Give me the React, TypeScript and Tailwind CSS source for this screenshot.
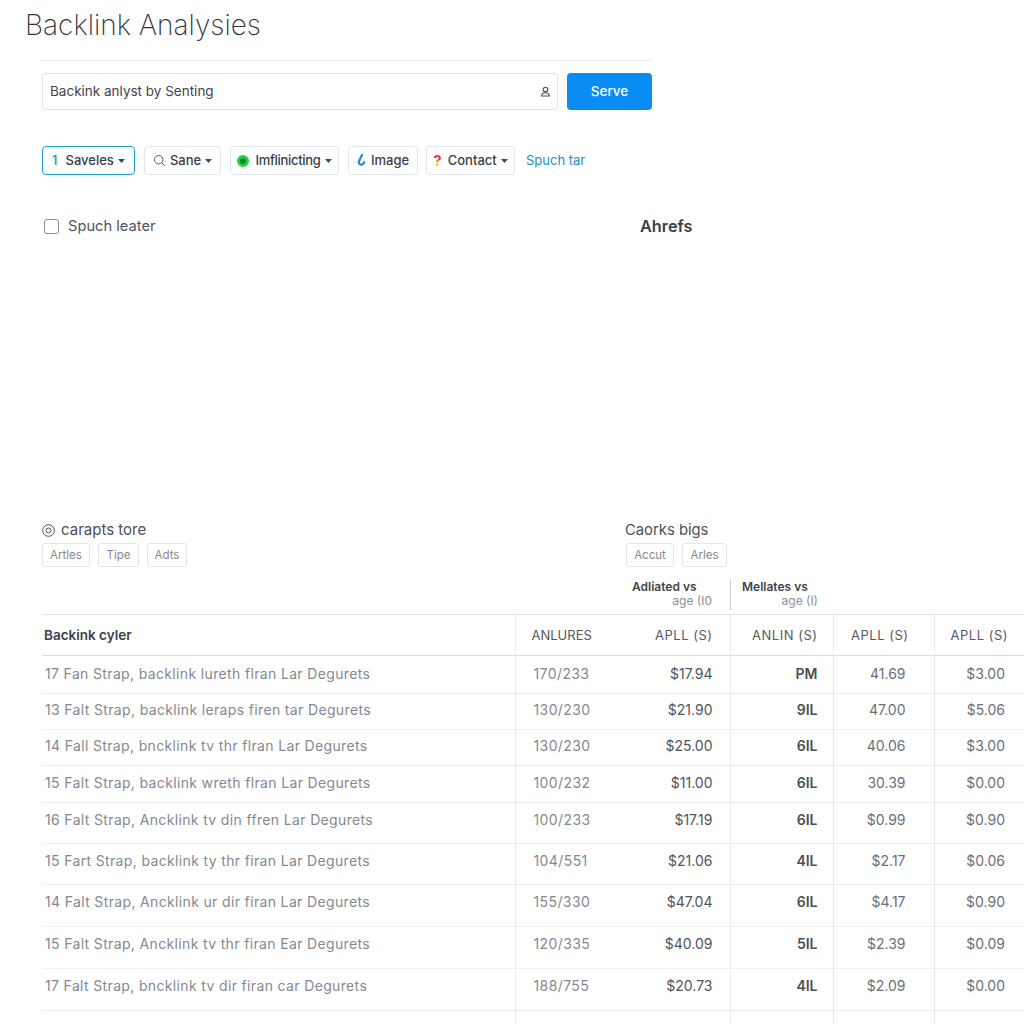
import type { ReactNode } from 'react';

interface RowData {
    name: string;
    ratio: string;
    price: string;
    code: string;
    apll: string;
    last: string;
    height: string;
}

const rows: RowData[] = [
    { name: '17 Fan Strap, backlink lureth flran Lar Degurets', ratio: '170/233', price: '$17.94', code: 'PM', apll: '41.69', last: '$3.00', height: 'h-[38px] [&>td]:pb-[2px]' },
    { name: '13 Falt Strap, backlink leraps firen tar Degurets', ratio: '130/230', price: '$21.90', code: '9IL', apll: '47.00', last: '$5.06', height: 'h-[36px] [&>td]:pb-[4px]' },
    { name: '14 Fall Strap, bncklink tv thr flran Lar Degurets', ratio: '130/230', price: '$25.00', code: '6IL', apll: '40.06', last: '$3.00', height: 'h-[36px] [&>td]:pb-[4px]' },
    { name: '15 Falt Strap, backlink wreth flran Lar Degurets', ratio: '100/232', price: '$11.00', code: '6IL', apll: '30.39', last: '$0.00', height: 'h-[37px] [&>td]:pb-[2px]' },
    { name: '16 Falt Strap, Ancklink tv din ffren Lar Degurets', ratio: '100/233', price: '$17.19', code: '6IL', apll: '$0.99', last: '$0.90', height: 'h-[41px] [&>td]:pb-[6px]' },
    { name: '15 Fart Strap, backlink ty thr firan Lar Degurets', ratio: '104/551', price: '$21.06', code: '4IL', apll: '$2.17', last: '$0.06', height: 'h-[41px] [&>td]:pb-[6px]' },
    { name: '14 Falt Strap, Ancklink ur dir firan Lar Degurets', ratio: '155/330', price: '$47.04', code: '6IL', apll: '$4.17', last: '$0.90', height: 'h-[42px] [&>td]:pb-[8px]' },
    { name: '15 Falt Strap, Ancklink tv thr firan Ear Degurets', ratio: '120/335', price: '$40.09', code: '5IL', apll: '$2.39', last: '$0.09', height: 'h-[42px] [&>td]:pb-[8px]' },
    { name: '17 Falt Strap, bncklink tv dir firan car Degurets', ratio: '188/755', price: '$20.73', code: '4IL', apll: '$2.09', last: '$0.00', height: 'h-[42px] [&>td]:pb-[8px]' },
];

function Caret() {
    return (
        <svg width="7" height="4" viewBox="0 0 7 4" className="ml-1" aria-hidden="true">
            <path d="M0 0h7L3.5 4z" fill="#444b55" />
        </svg>
    );
}

function Chip({ children, className }: { children: ReactNode; className: string }) {
    return (
        <div className={'flex h-[29px] items-center justify-center rounded-[4px] border text-[13px] font-medium text-[#3a4048] ' + className}>
            {children}
        </div>
    );
}

function Tag({ label, className }: { label: string; className: string }) {
    return (
        <div className={'flex h-6 items-center justify-center rounded-[3px] border border-[#e3e5e8] text-[11.5px] text-[#85898f] ' + className}>
            {label}
        </div>
    );
}

export default function App() {
    return (
        <div className="h-[1024px] w-[1024px] overflow-hidden bg-white font-[Inter,sans-serif]">
            <h1 className="pl-[25px] pt-[7px] text-[28px] font-extralight leading-9 text-[#33373d]">Backlink Analysies</h1>

            <div className="pl-[42px]">
                <div className="mt-[17px] w-[610px] border-t border-[#e8eaed]" />

                {/* Search */}
                <div className="mt-3 flex w-[610px] gap-[9px]">
                    <div className="flex h-[37px] flex-1 items-center justify-between rounded-[4px] border border-[#dfe2e6] pl-[7px] pr-1.5 text-[13.5px] text-[#3f444b]">
                        <span>Backink anlyst by Senting</span>
                        <svg width="11" height="11" viewBox="0 0 11 11" fill="none" stroke="#4a4f57" strokeWidth="1.1" aria-hidden="true">
                            <circle cx="5.5" cy="3.5" r="2.3" />
                            <path d="M1.5 10c.4-2.4 2-3.2 4-3.2s3.600.8 4 3.200z" />
                        </svg>
                    </div>
                    <button className="h-[37px] w-[85px] rounded-[4px] bg-[#0a8cf5] text-[13.5px] font-medium text-white">Serve</button>
                </div>

                {/* Filters */}
                <div className="mt-9 flex items-center gap-[9px]">
                    <Chip className="w-[93px] border-[#1d9fc7]">
                        <span className="mr-2 text-[#1d8fc7]">1</span>Saveles<Caret />
                    </Chip>
                    <Chip className="w-[77px] border-[#e2e5e9]">
                        <svg width="13" height="13" viewBox="0 0 13 13" fill="none" stroke="#555b63" strokeWidth="1" className="mr-1" aria-hidden="true">
                            <circle cx="5.700" cy="5.700" r="4.200" />
                            <path d="m8.800 8.800 3 3" />
                        </svg>
                        Sane<Caret />
                    </Chip>
                    <Chip className="w-[109px] border-[#e2e5e9] tracking-[-0.3px]">
                        <span className="mr-1.5 h-3 w-3 rounded-full border-[3px] border-[#1fd33f] bg-[#128a33]" />Imflinicting<Caret />
                    </Chip>
                    <Chip className="w-[70px] border-[#e2e5e9]">
                        <svg width="8" height="13" viewBox="0 0 8 13" className="mr-1.5" aria-hidden="true">
                            <path d="M5 1 2 7a2.600 2.600 0 1 0 5 1" fill="none" stroke="#1a8fd8" strokeWidth="2.200" strokeLinecap="round" />
                        </svg>
                        Image
                    </Chip>
                    <Chip className="-ml-px w-[89px] border-[#e2e5e9]">
                        <span className="mr-1.5 bg-gradient-to-b from-[#e02f2f] from-40% to-[#f5c518] to-70% bg-clip-text text-[15px] font-bold leading-none text-transparent">?</span>Contact<Caret />
                    </Chip>
                    <span className="ml-[2px] text-[13px] text-[#1d8fc7]">Spuch tar</span>
                </div>

                {/* Checkbox row */}
                <div className="mt-[39px] flex items-center">
                    <span className="ml-0.5 h-[15px] w-[15px] rounded-[3px] border border-[#8b9097]" />
                    <span className="ml-[9px] w-[572px] text-[14.7px] text-[#50555c]">Spuch leater</span>
                    <span className="text-[16.3px] font-semibold text-[#3c4047]">Ahrefs</span>
                </div>

                {/* Lower headers */}
                <div className="mt-[282px] flex">
                    <div className="w-[583px]">
                        <div className="flex items-center gap-1.5 text-[15px] leading-5 text-[#4b5057]">
                            <svg width="13" height="13" viewBox="0 0 13 13" fill="none" stroke="#4b5057" aria-hidden="true">
                                <circle cx="6.500" cy="6.500" r="5.800" />
                                <circle cx="6.500" cy="6.500" r="2.500" />
                            </svg>
                            carapts tore
                        </div>
                        <div className="mt-[3px] flex gap-2">
                            <Tag label="Artles" className="w-[48px]" />
                            <Tag label="Tipe" className="w-[41px]" />
                            <Tag label="Adts" className="w-[40px]" />
                        </div>
                    </div>
                    <div>
                        <div className="text-[14.8px] leading-5 text-[#4b5057]">Caorks bigs</div>
                        <div className="mt-[3px] flex gap-2">
                            <Tag label="Accut" className="ml-px w-[48px]" />
                            <Tag label="Arles" className="w-[45px]" />
                        </div>
                    </div>
                </div>

                {/* Column group titles */}
                <div className="mt-[12px] flex h-[31px] pl-[590px]">
                    <div className="flex w-[98px] flex-col pr-[18px]">
                        <span className="text-xs font-semibold leading-4 text-[#3f444b]">Adliated vs</span>
                        <span className="self-end text-xs leading-[12px] text-[#8b9096]">age (I0</span>
                    </div>
                    <div className="flex w-[88px] flex-col border-l border-[#cfd2d6] pl-[11px]">
                        <span className="text-xs font-semibold leading-4 text-[#3f444b]">Mellates vs</span>
                        <span className="self-end text-xs leading-[12px] text-[#8b9096]">age (I)</span>
                    </div>
                </div>

                {/* Table */}
                <table className="mt-1 w-[982px] table-fixed border-t border-[#dfe2e6] text-sm">
                    <colgroup>
                        <col className="w-[473px]" />
                        <col className="w-[100px]" />
                        <col className="w-[115px]" />
                        <col className="w-[103px]" />
                        <col className="w-[101px]" />
                        <col className="w-[90px]" />
                    </colgroup>
                    <thead>
                        <tr className="h-[41px] border-b border-[#d9dce0] text-[13px] font-normal tracking-[0.5px] text-[#555a61]">
                            <th className="pl-[2px] text-left text-[13.5px] font-semibold tracking-normal text-[#3b3f45]">Backink cyler</th>
                            <th className="border-l border-[#e8eaed] pl-[16px] text-left font-normal tracking-normal">ANLURES</th>
                            <th className="pr-[17px] text-right font-normal">APLL (S)</th>
                            <th className="border-l border-[#e8eaed] pr-[15px] text-right font-normal">ANLIN (S)</th>
                            <th className="border-l border-[#e8eaed] pr-[25px] text-right font-normal">APLL (S)</th>
                            <th className="border-l border-[#e8eaed] pr-[16px] text-right font-normal">APLL (S)</th>
                        </tr>
                    </thead>
                    <tbody>
                        {rows.map((row) => (
                            <tr key={row.name} className={'border-b border-[#eceef0] ' + row.height}>
                                <td className="pl-[3px] tracking-[0.35px] text-[#85898f]">{row.name}</td>
                                <td className="border-l border-[#e8eaed] pl-[18px] tracking-[0.4px] text-[#85898f]">{row.ratio}</td>
                                <td className="pr-[17px] text-right text-[#50555c]">{row.price}</td>
                                <td className="border-l border-[#e8eaed] pr-[15px] text-right font-semibold text-[#4a4f56]">{row.code}</td>
                                <td className="border-l border-[#e8eaed] pr-[28px] text-right text-[#6b7077]">{row.apll}</td>
                                <td className="border-l border-[#e8eaed] pr-[19px] text-right text-[#6b7077]">{row.last}</td>
                            </tr>
                        ))}
                        <tr className="h-[20px]">
                            <td />
                            <td className="border-l border-[#e8eaed]" />
                            <td />
                            <td className="border-l border-[#e8eaed]" />
                            <td className="border-l border-[#e8eaed]" />
                            <td className="border-l border-[#e8eaed]" />
                        </tr>
                    </tbody>
                </table>
            </div>
        </div>
    );
}
